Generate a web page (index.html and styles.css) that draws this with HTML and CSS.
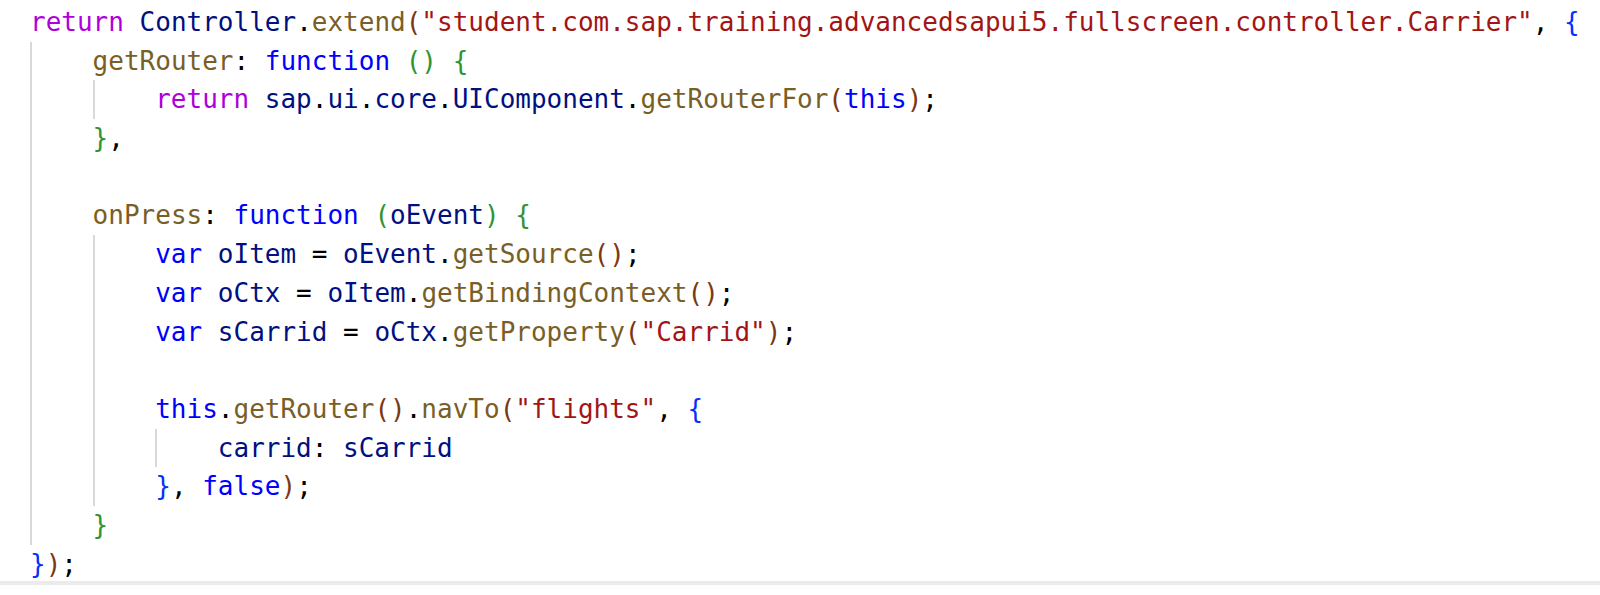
FILE: index.html
```html
<!DOCTYPE html>
<html>
<head>
<meta charset="utf-8">
<link rel="stylesheet" href="styles.css">
</head>
<body>
<div class="code">
<div class="line"><span class="k">return</span> <span class="v">Controller</span>.<span class="f">extend</span><span class="p1">(</span><span class="s">"student.com.sap.training.advancedsapui5.fullscreen.controller.Carrier"</span>, <span class="p2">{</span></div>
<div class="blk">
  <div class="line"><span class="f">getRouter</span>: <span class="b">function</span> <span class="p3">()</span> <span class="p3">{</span></div>
  <div class="blk">
    <div class="line"><span class="k">return</span> <span class="v">sap</span>.<span class="v">ui</span>.<span class="v">core</span>.<span class="v">UIComponent</span>.<span class="f">getRouterFor</span><span class="p1">(</span><span class="b">this</span><span class="p1">)</span>;</div>
  </div>
  <div class="line"><span class="p3">}</span>,</div>
  <div class="line"> </div>
  <div class="line"><span class="f">onPress</span>: <span class="b">function</span> <span class="p3">(</span><span class="v">oEvent</span><span class="p3">)</span> <span class="p3">{</span></div>
  <div class="blk">
    <div class="line"><span class="b">var</span> <span class="v">oItem</span> = <span class="v">oEvent</span>.<span class="f">getSource</span><span class="p1">()</span>;</div>
    <div class="line"><span class="b">var</span> <span class="v">oCtx</span> = <span class="v">oItem</span>.<span class="f">getBindingContext</span><span class="p1">()</span>;</div>
    <div class="line"><span class="b">var</span> <span class="v">sCarrid</span> = <span class="v">oCtx</span>.<span class="f">getProperty</span><span class="p1">(</span><span class="s">"Carrid"</span><span class="p1">)</span>;</div>
    <div class="line"> </div>
    <div class="line"><span class="b">this</span>.<span class="f">getRouter</span><span class="p1">()</span>.<span class="f">navTo</span><span class="p1">(</span><span class="s">"flights"</span>, <span class="p2">{</span></div>
    <div class="blk">
      <div class="line"><span class="v">carrid</span>: <span class="v">sCarrid</span></div>
    </div>
    <div class="line"><span class="p2">}</span>, <span class="b">false</span><span class="p1">)</span>;</div>
  </div>
  <div class="line"><span class="p3">}</span></div>
</div>
<div class="line"><span class="p2">}</span><span class="p1">)</span>;</div>
</div>
<div class="band"></div>
</body>
</html>
```

FILE: styles.css
```css
html, body {
  margin: 0;
  padding: 0;
  background: #ffffff;
}

.code {
  height: 581px;
  box-sizing: border-box;
  padding: 3px 0 0 30px;
  overflow: hidden;
  font-family: "DejaVu Sans Mono", "Liberation Mono", monospace;
  font-size: 26px;
  color: #000000;
}

.line {
  height: 38.7px;
  line-height: 38.7px;
  white-space: pre;
}

.blk {
  border-left: 2px solid #d9d9d9;
  padding-left: calc(4ch - 2px);
}

.band {
  height: 4px;
  background: #ebebeb;
}

.k { color: #af00db; }
.b { color: #0000ff; }
.v { color: #001080; }
.f { color: #795e26; }
.s { color: #a31515; }
.p1 { color: #7b3814; }
.p2 { color: #0431fa; }
.p3 { color: #319331; }
```
